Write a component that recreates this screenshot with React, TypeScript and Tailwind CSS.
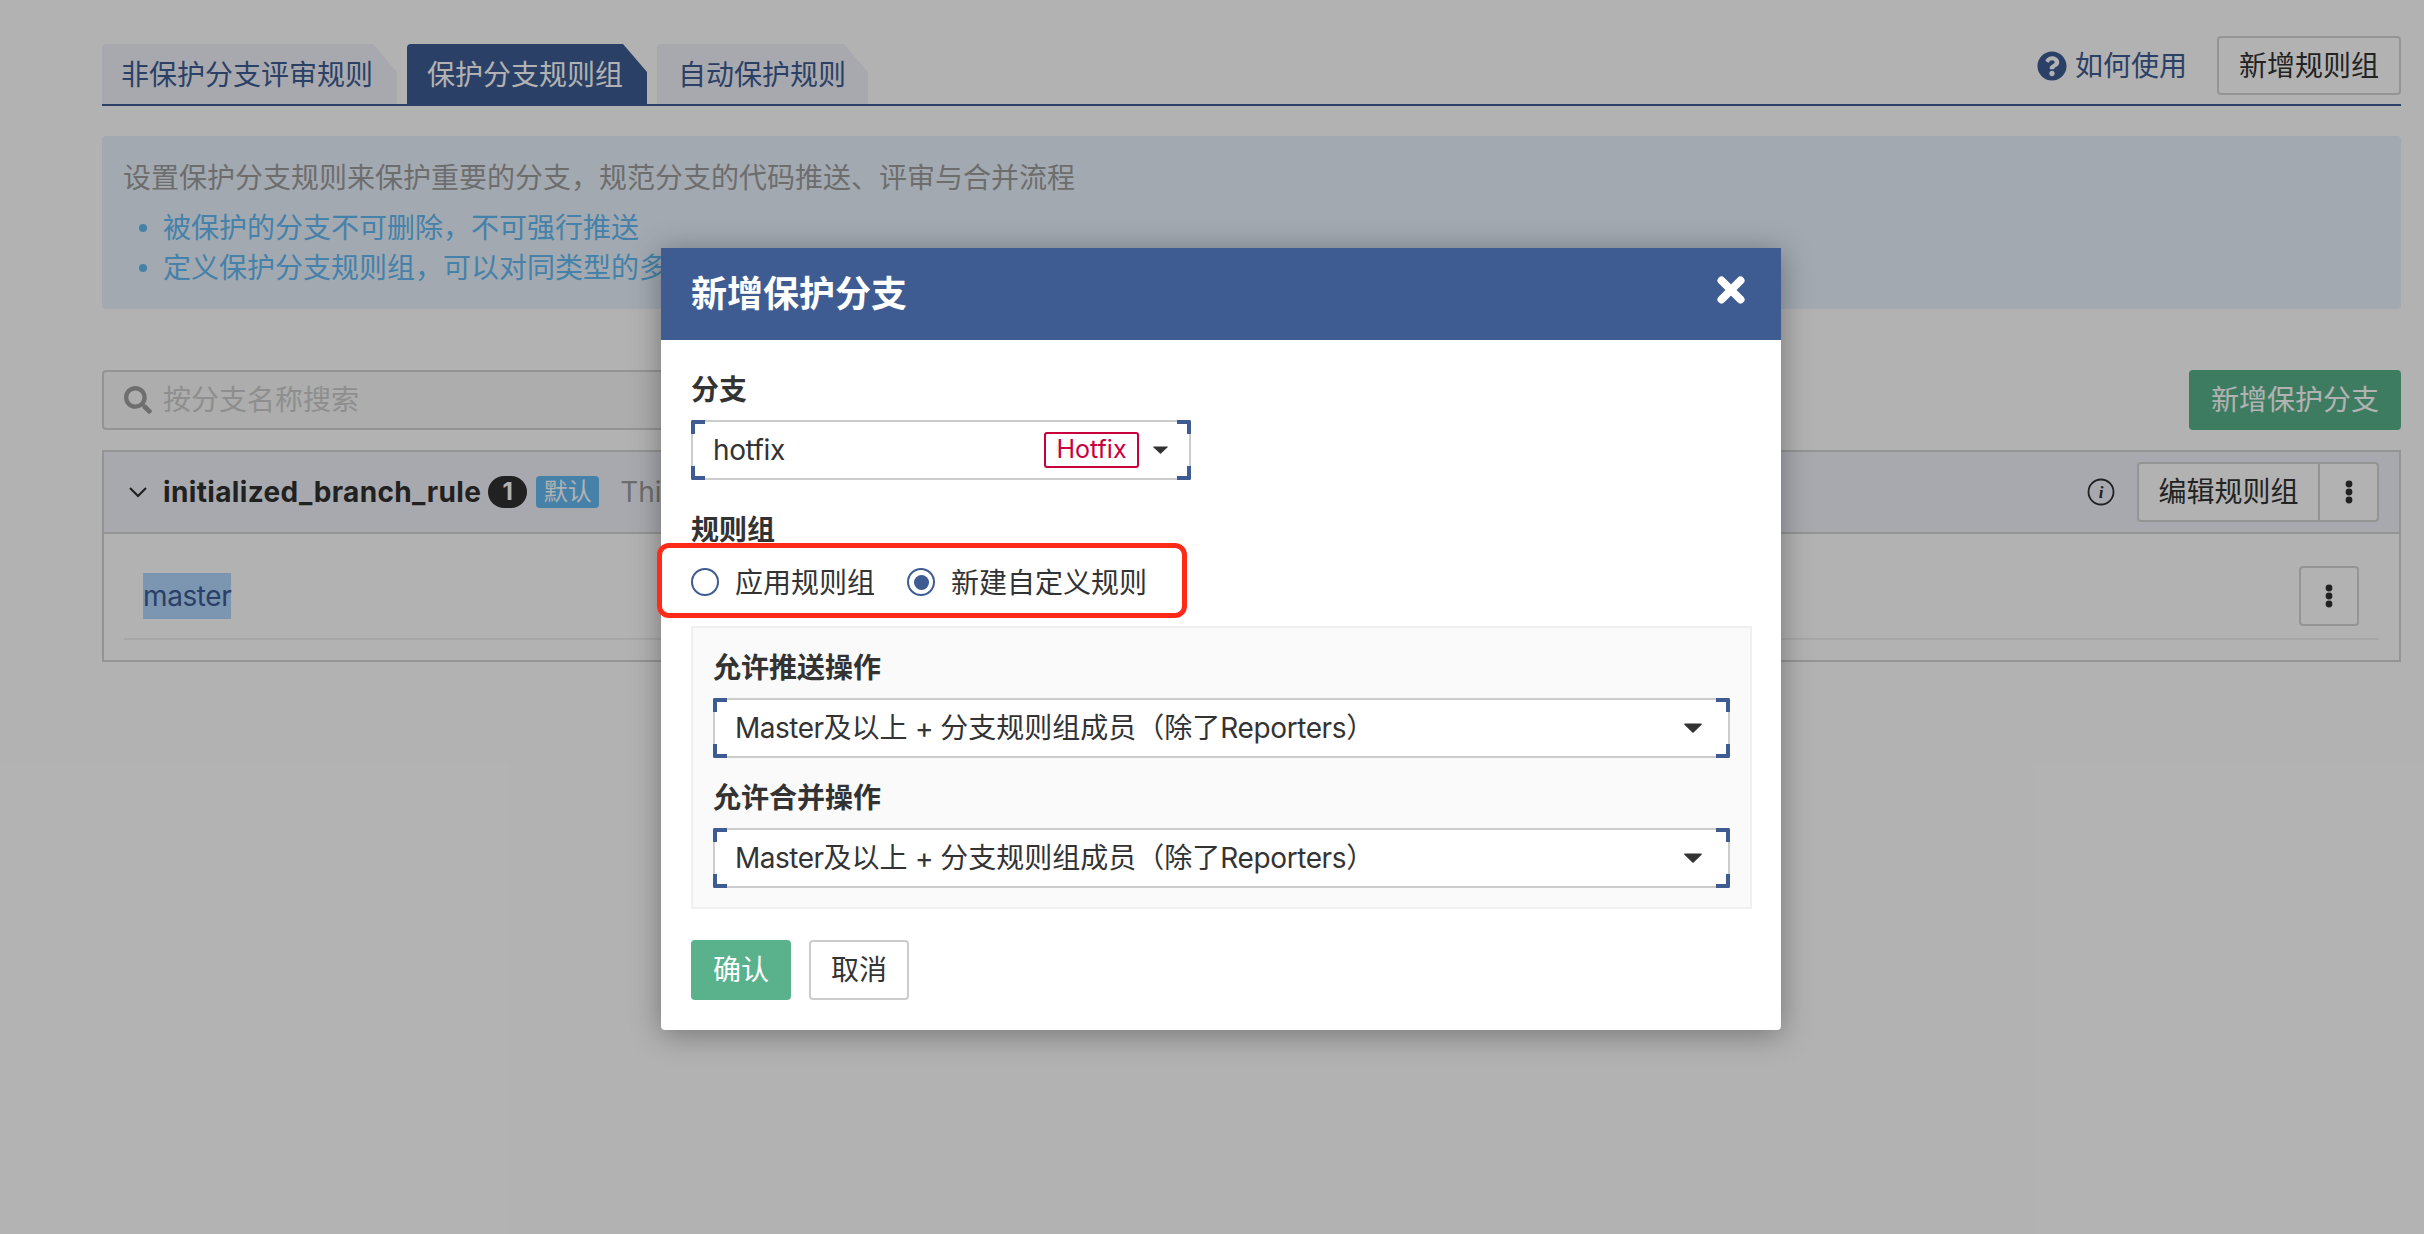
import { FaQuestionCircle, FaSearch } from "react-icons/fa";

const FONT = "font-['Inter','Noto_Sans_CJK_SC',sans-serif]";

function Corners() {
  return (
    <>
      <span className="absolute -left-[2px] -top-[2px] h-[14px] w-[14px] rounded-tl-[2px] border-l-4 border-t-4 border-[#3e5c92]" />
      <span className="absolute -right-[2px] -top-[2px] h-[14px] w-[14px] rounded-tr-[2px] border-r-4 border-t-4 border-[#3e5c92]" />
      <span className="absolute -bottom-[2px] -left-[2px] h-[14px] w-[14px] rounded-bl-[2px] border-b-4 border-l-4 border-[#3e5c92]" />
      <span className="absolute -bottom-[2px] -right-[2px] h-[14px] w-[14px] rounded-br-[2px] border-b-4 border-r-4 border-[#3e5c92]" />
    </>
  );
}

function Caret({ w, h }: { w: number; h: number }) {
  return (
    <svg width={w} height={h} viewBox="0 0 18 10" preserveAspectRatio="none" className="shrink-0">
      <path d="M1 0.5h16c.7 0 1 .7.6 1.2L9.6 9.5c-.3.3-.9.3-1.2 0L.4 1.7C0 1.2.3.5 1 .5z" fill="#333333" />
    </svg>
  );
}

function Kebab() {
  return (
    <svg width="8" height="24" viewBox="0 0 8 24" fill="#303030">
      <circle cx="4" cy="4" r="3.4" />
      <circle cx="4" cy="12" r="3.4" />
      <circle cx="4" cy="20" r="3.4" />
    </svg>
  );
}

function AccessSelect({ className }: { className?: string }) {
  return (
    <div className={`relative flex h-[60px] items-center rounded-[2px] border-2 border-[#cccccc] bg-white pl-[20px] pr-[26px] ${className ?? ""}`}>
      <Corners />
      <span className="flex-1 text-[28px] leading-[40px] text-[#333333]">
        <span className="tracking-[-0.5px]">Master</span>及以上<span className="tracking-[-0.5px]"> + </span>分支规则组成员（除了<span className="tracking-[-0.4px]">Reporters</span>）
      </span>
      <Caret w={18} h={10} />
    </div>
  );
}

function Radio({ checked, label }: { checked?: boolean; label: string }) {
  return (
    <label className="flex items-center gap-[16px]">
      <span className="flex h-[28px] w-[28px] items-center justify-center rounded-full border-2 border-[#3e5c92] bg-white">
        {checked && <span className="h-[15px] w-[15px] rounded-full bg-[#3e5c92]" />}
      </span>
      <span className="pt-[2px] text-[28px] leading-[40px] text-[#333333]">{label}</span>
    </label>
  );
}

export default function App() {
  return (
    <div className={`relative h-[1234px] w-[2424px] overflow-hidden bg-white ${FONT}`}>
      {/* page behind the dialog */}
      <div className="pl-[102px] pr-[23px] pt-[36px]">
        <div className="flex h-[70px] items-end justify-between border-b-2 border-[#3e5c92]">
          <div className="-mb-[2px] flex items-start gap-[10px]">
            <div className="flex h-[60px] w-[295px] items-center rounded-tl-[4px] bg-[#f1f3fb] pl-[19px] pt-[1px] text-[28px] text-[#3e5c92] [clip-path:polygon(0_0,calc(100%-24px)_0,100%_28px,100%_100%,0_100%)]">
              非保护分支评审规则
            </div>
            <div className="flex h-[62px] w-[240px] items-center rounded-tl-[4px] bg-[#3e5c92] pb-[1px] pl-5 text-[28px] text-white [clip-path:polygon(0_0,calc(100%-24px)_0,100%_28px,100%_100%,0_100%)]">
              保护分支规则组
            </div>
            <div className="flex h-[60px] w-[211px] items-center rounded-tl-[4px] bg-[#f1f3fb] pl-[21px] pt-[1px] text-[28px] text-[#3e5c92] [clip-path:polygon(0_0,calc(100%-24px)_0,100%_28px,100%_100%,0_100%)]">
              自动保护规则
            </div>
          </div>
          <div className="mb-[9px] flex items-center">
            <FaQuestionCircle size={30} className="text-[#3e5c92]" />
            <span className="ml-[8px] text-[28px] text-[#3e5c92]">如何使用</span>
            <button className="ml-[30px] flex h-[59px] w-[184px] items-center justify-center rounded-[4px] border-2 border-[#d5d5d5] text-[28px] text-[#333333]">
              新增规则组
            </button>
          </div>
        </div>

        <div className="mt-[30px] h-[173px] rounded-[4px] bg-[#e9f3fe] pl-[21px] pt-[22px] text-[28px] leading-[40px]">
          <p className="text-[#9d9d9d]">设置保护分支规则来保护重要的分支，规范分支的代码推送、评审与合并流程</p>
          <ul className="mt-[10px] text-[#63b9f2]">
            <li className="flex items-center">
              <span className="ml-[16px] mr-[16px] h-[8px] w-[8px] rounded-full bg-[#63b9f2]" />
              被保护的分支不可删除，不可强行推送
            </li>
            <li className="flex items-center">
              <span className="ml-[16px] mr-[16px] h-[8px] w-[8px] rounded-full bg-[#63b9f2]" />
              定义保护分支规则组，可以对同类型的多
            </li>
          </ul>
        </div>

        <div className="mt-[61px] flex items-center justify-between">
          <div className="flex h-[60px] w-[1200px] items-center rounded-[4px] border-2 border-[#d5d5d5] bg-[#f6f8f7] pl-[20px]">
            <FaSearch size={28} className="text-[#9e9e9e]" />
            <span className="ml-[11px] text-[28px] text-[#cccccc]">按分支名称搜索</span>
          </div>
          <button className="flex h-[60px] w-[212px] items-center justify-center rounded-[4px] bg-[#5ab28c] text-[28px] text-white">
            新增保护分支
          </button>
        </div>

        <div className="mt-[20px] border-2 border-[#d5d5d5] pb-[20px]">
          <div className="flex h-[82px] items-center border-b-2 border-[#d5d5d5] bg-[#f0f3fb] pl-[25px] pr-[20px]">
            <svg width="18" height="11" viewBox="0 0 18 11" fill="none" stroke="#303030" strokeWidth="2.2">
              <path d="M1 1l8 8 8-8" />
            </svg>
            <span className="ml-[16px] text-[28px] font-bold tracking-[0.35px] text-[#303030]">initialized_branch_rule</span>
            <span className="ml-[7px] flex h-[32px] w-[39px] items-center justify-center rounded-full bg-[#303030] text-[24px] font-bold text-white">1</span>
            <span className="ml-[9px] flex h-[32px] w-[63px] items-center justify-center rounded-[4px] bg-[#63b9f2] text-[24px] text-white">默认</span>
            <span className="ml-[21px] text-[28px] text-[#9d9d9d]">This</span>
            <svg width="28" height="28" viewBox="0 0 28 28" className="ml-auto mr-[22px]">
              <circle cx="14" cy="14" r="12.5" fill="none" stroke="#303030" strokeWidth="1.8" />
              <text x="14" y="20" textAnchor="middle" fontSize="17" fontStyle="italic" fontWeight="700" fontFamily="'Liberation Serif', serif" fill="#303030">i</text>
            </svg>
            <div className="flex h-[60px] w-[242px] rounded-[4px] border-2 border-[#d5d5d5] bg-white">
              <span className="flex w-[181px] items-center justify-center border-r-2 border-[#d5d5d5] text-[28px] text-[#333333]">编辑规则组</span>
              <span className="flex flex-1 items-center justify-center">
                <Kebab />
              </span>
            </div>
          </div>
          <div className="mx-[20px] flex items-center justify-between border-b-2 border-[#f0f0f0] pb-[12px] pl-[19px] pr-[20px] pt-[32px]">
            <span className="flex h-[46px] items-center bg-[#b2d7ff] text-[28px] tracking-[-0.4px] text-[#3e5c92]">master</span>
            <button className="flex h-[60px] w-[60px] items-center justify-center rounded-[4px] border-2 border-[#d5d5d5]">
              <Kebab />
            </button>
          </div>
        </div>
      </div>

      {/* backdrop + dialog */}
      <div className="absolute inset-0 bg-black/30">
        <div className="absolute left-[661px] top-[248px] h-[782px] w-[1120px] rounded-b-[4px] bg-white shadow-[0_4px_30px_rgba(0,0,0,0.35)]">
          <div className="flex h-[92px] items-center justify-between bg-[#3e5c92] pl-[30px] pr-[36px]">
            <span className="text-[36px] font-bold text-white">新增保护分支</span>
            <svg width="28" height="28" viewBox="0 0 28 28" className="-mt-[9px]" stroke="#ffffff" strokeWidth="8" strokeLinecap="round">
              <path d="M4.5 4.5l19 19M23.5 4.5l-19 19" />
            </svg>
          </div>
          <div className="pl-[30px] pr-[29px] pt-[30px]">
            <div className="text-[28px] font-semibold leading-[40px] text-[#333333]">分支</div>
            <div className="relative mt-[10px] flex h-[60px] w-[500px] items-center rounded-[2px] border-2 border-[#cccccc] bg-white pl-[20px]">
              <Corners />
              <span className="flex-1 text-[28px] leading-[40px] tracking-[-0.4px] text-[#333333]">hotfix</span>
              <span className="flex h-[36px] w-[95px] items-center justify-center rounded-[3px] border-2 border-[#c8003c] text-[25px] text-[#c8003c]">Hotfix</span>
              <span className="ml-[14px] mr-[21px]">
                <Caret w={15} h={8} />
              </span>
            </div>
            <div className="mt-[30px] text-[28px] font-semibold leading-[40px] text-[#333333]">规则组</div>
            <div className="mt-[11px] flex gap-[32px]">
              <Radio label="应用规则组" />
              <Radio checked label="新建自定义规则" />
            </div>
            <div className="mt-[23px] border-2 border-[#f0f0f0] bg-[#fafafa] pb-[19px] pl-[20px] pr-[20px] pt-[20px]">
              <div className="text-[28px] font-semibold leading-[40px] text-[#333333]">允许推送操作</div>
              <AccessSelect className="mt-[10px]" />
              <div className="mt-[20px] text-[28px] font-semibold leading-[40px] text-[#333333]">允许合并操作</div>
              <AccessSelect className="mt-[10px]" />
            </div>
            <div className="mt-[31px] flex gap-[18px]">
              <button className="flex h-[60px] w-[100px] items-center justify-center rounded-[4px] bg-[#5ab28c] text-[28px] text-white">确认</button>
              <button className="flex h-[60px] w-[100px] items-center justify-center rounded-[4px] border-2 border-[#cccccc] text-[28px] text-[#333333]">取消</button>
            </div>
          </div>
          {/* red annotation around the radios */}
          <div className="absolute -left-[4px] top-[295px] h-[75px] w-[530px] rounded-[12px] border-[5px] border-[#ff2a18]" />
        </div>
      </div>
    </div>
  );
}
